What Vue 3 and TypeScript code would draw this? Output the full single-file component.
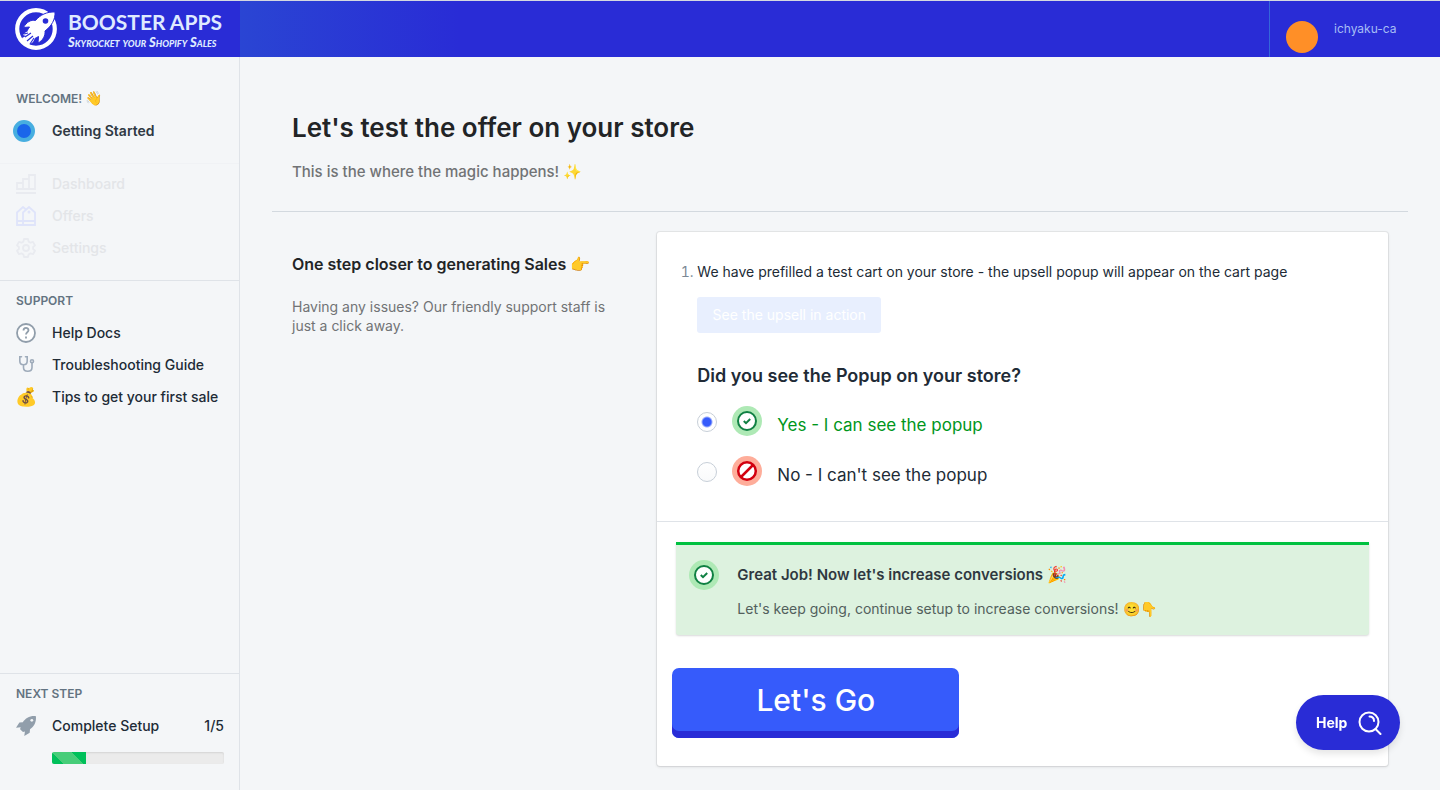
<script setup lang="ts">
import { ref } from 'vue'

type Answer = 'yes' | 'no'

const answer = ref<Answer>('yes')
const stepsDone = 1
const stepsTotal = 5
</script>

<template>
  <div class="app">
    <header class="topbar">
      <a class="brand" href="#" aria-label="Booster Apps">
        <svg class="brand-mark" viewBox="0 0 42 42" aria-hidden="true">
          <circle cx="21" cy="21" r="18.8" fill="none" stroke="#fff" stroke-width="4.2" />
          <path
            d="M40 4c-8-.5-15 3-19.500 8.500-4.500-1-9 1.500-12 7l6-.5c-2 2.500-3 5-3.500 7.500l5 5c2.500-.5 5-1.500 7.500-3l-.5 6.500c5-2.500 7.500-7.500 7-12C36.500 18 40.500 11.500 40 4Z"
            fill="#fff" stroke="#292cd6" stroke-width="1"
          />
          <circle cx="30.500" cy="13" r="2.800" fill="#292cd6" />
          <path d="m11 24 5-1-2 3 5-1-2 4 4-1-3 6-4 3-6-3-1-4 4-2-3-1Z" fill="#fff" />
          <path d="m10 29 6-4m-4 8 6-5m-9-2 4-1m2 11 4-6" stroke="#292cd6" stroke-width="1.200" fill="none" />
        </svg>
        <span class="brand-text">
          <span class="brand-name">BOOSTER APPS</span>
          <span class="brand-tag">Skyrocket your Shopify Sales</span>
        </span>
      </a>
      <button class="account" type="button">
        <span class="avatar"></span>
        <span class="account-name">ichyaku-ca</span>
      </button>
    </header>

    <div class="body">
      <aside class="sidebar">
        <nav class="group welcome">
          <h2 class="group-title">WELCOME! <span class="wave">👋</span></h2>
          <a class="item current" href="#"><span class="slot"><span class="dot"></span></span>Getting Started</a>
        </nav>

        <nav class="group disabled">
          <a class="item" href="#">
            <svg class="icon" viewBox="0 0 20 20" fill="none" stroke="#e9ebf0" stroke-width="1.800">
              <path d="M1 15V9h6v6Zm6 0V5h6v10Zm6 0V1h6v14ZM0 19h20" />
            </svg>Dashboard</a>
          <a class="item" href="#">
            <svg class="icon" viewBox="0 0 20 20" fill="none" stroke="#dfe4fa" stroke-width="1.800">
              <path d="M7 19V6.500L13 1l6 5.500V19H1V6.500L7 1l3 2.500M1 15h18" />
              <circle cx="13" cy="6" r=".6" />
            </svg>Offers</a>
          <a class="item" href="#">
            <svg class="icon" viewBox="0 0 20 20" fill="none" stroke="#e9ebf0" stroke-width="1.800" stroke-linejoin="round">
              <path d="M8 1h4l.6 2.600 1.900 1.100 2.500-.8 2 3.500L17.100 9v2l1.900 1.700-2 3.500-2.500-.8-1.900 1.100L12 19H8l-.6-2.500-1.900-1.100-2.500.8-2-3.500L2.900 11V9L1 7.400l2-3.500 2.500.8 1.900-1.100Z" />
              <circle cx="10" cy="10" r="3" />
            </svg>Settings</a>
        </nav>

        <nav class="group support">
          <h2 class="group-title">SUPPORT</h2>
          <a class="item" href="#">
            <svg class="icon" viewBox="0 0 20 20" fill="none" stroke="#919eab" stroke-width="1.800">
              <circle cx="10" cy="10" r="9" fill="#fff" />
              <path d="M7.500 7.600C7.500 4 12.500 4 12.500 7.300c0 2-2.500 2-2.500 4.200" />
              <path d="M10 13.500v2" />
            </svg>Help Docs</a>
          <a class="item" href="#">
            <svg class="icon" viewBox="0 0 20 20" fill="none" stroke="#9eabba" stroke-width="1.600" stroke-linecap="round">
              <path d="M5.500 1.800H3.800V6c0 5 7.400 5 7.400 0V1.800H9.500M7.500 10v2.500c0 5 8.500 5 8.500 0V8" />
              <circle cx="16" cy="6.300" r="1.500" />
            </svg>Troubleshooting Guide</a>
          <a class="item" href="#"><span class="slot emoji">💰</span>Tips to get your first sale</a>
        </nav>

        <section class="group next">
          <h2 class="group-title">NEXT STEP</h2>
          <a class="item" href="#">
            <svg class="icon rocket" viewBox="0 0 20 20" aria-hidden="true">
              <path
                d="M19.900.2C13.500-.4 9.800 2.300 6.800 6.200L3.400 6.500 0 11.800l4.700-.5c-.3.700-.5 1.300-.6 1.900l2.900 2.900c.7-.1 1.300-.3 1.900-.6L8.300 20l5.400-3.200.3-3.500C17.900 10.300 20.500 6.500 19.900.2Z"
                fill="#919eab"
              />
              <circle cx="15.800" cy="4.300" r="1.400" fill="#f4f6f8" />
            </svg>
            <span>Complete Setup</span>
            <span class="count">{{ stepsDone }}/{{ stepsTotal }}</span>
          </a>
          <div class="progress" role="progressbar" aria-label="Setup progress" :aria-valuenow="stepsDone" aria-valuemin="0" :aria-valuemax="stepsTotal">
            <div class="progress-fill" :style="{ width: (stepsDone / stepsTotal) * 100 + '%' }"></div>
          </div>
        </section>
      </aside>

      <main class="main">
        <header class="page-head">
          <h1>Let's test the offer on your store</h1>
          <p>This is the where the magic happens! ✨</p>
        </header>

        <div class="columns">
          <section class="intro">
            <h2>One step closer to generating Sales 👉</h2>
            <p>Having any issues? Our friendly support staff is just a click away.</p>
          </section>

          <section class="card">
            <div class="card-top">
              <ol class="steps">
                <li>We have prefilled a test cart on your store - the upsell popup will appear on the cart page</li>
              </ol>
              <button class="see" type="button" disabled>See the upsell in action</button>
              <fieldset class="question">
                <legend>Did you see the Popup on your store?</legend>
                <label class="choice yes">
                  <input v-model="answer" type="radio" name="seen" value="yes" />
                  <svg class="badge" viewBox="0 0 30 30" fill="none" aria-hidden="true">
                    <circle cx="15" cy="15" r="15" fill="#aee9b5" />
                    <circle cx="15" cy="15" r="9" fill="#fff" stroke="#108043" stroke-width="2" />
                    <path d="m11.800 15 2.200 2.200 4.200-4.200" stroke="#108043" stroke-width="2" />
                  </svg>
                  <span class="choice-text">Yes - I can see the popup</span>
                </label>
                <label class="choice">
                  <input v-model="answer" type="radio" name="seen" value="no" />
                  <svg class="badge" viewBox="0 0 30 30" fill="none" aria-hidden="true">
                    <circle cx="15" cy="15" r="15" fill="#fead9a" />
                    <circle cx="15" cy="15" r="8.800" fill="#fff" stroke="#d2000f" stroke-width="2.500" />
                    <path d="m9 21 12-12" stroke="#d2000f" stroke-width="2.500" />
                  </svg>
                  <span class="choice-text">No - I can't see the popup</span>
                </label>
              </fieldset>
            </div>

            <div class="card-bottom">
              <div class="banner" role="status">
                <svg class="badge" viewBox="0 0 30 30" fill="none" aria-hidden="true">
                  <circle cx="15" cy="15" r="15" fill="#aee9b5" />
                  <circle cx="15" cy="15" r="9" fill="#fff" stroke="#108043" stroke-width="2" />
                  <path d="m11.800 15 2.200 2.200 4.200-4.200" stroke="#108043" stroke-width="2" />
                </svg>
                <div>
                  <h3>Great Job! Now let's increase conversions <span class="party">🎉</span></h3>
                  <p>Let's keep going, continue setup to increase conversions! 😊👇</p>
                </div>
              </div>
              <button class="go" type="button">Let's Go</button>
            </div>
          </section>
        </div>
      </main>
    </div>

    <button class="help" type="button">
      Help
      <svg viewBox="0 0 24 24" fill="none" stroke="#fff" stroke-width="2" stroke-linecap="round" aria-hidden="true">
        <circle cx="11" cy="11" r="9.500" />
        <path d="m17.500 18 5 5M11.500 5.500c2.600 0 4.500 1.800 4.500 4.500" />
      </svg>
    </button>
  </div>
</template>

<style>
body {
  margin: 0;
  background: #f4f6f8;
}
</style>

<style scoped>
* {
  box-sizing: border-box;
}
.app {
  min-height: 100vh;
  display: flex;
  flex-direction: column;
  background: #f4f6f8;
  color: #212b36;
  font: 400 14px/20px Inter, "Liberation Sans", sans-serif;
}
h1, h2, h3, p, ol, fieldset {
  margin: 0;
  padding: 0;
}
button, input {
  font: inherit;
}
a {
  color: inherit;
  text-decoration: none;
}

.topbar {
  height: 57px;
  display: flex;
  justify-content: space-between;
  border-top: 1px solid #d4d8e0;
  background: linear-gradient(90deg, #2a45d3, #292cd6 220px) 240px 0 no-repeat #292cd6;
}
.brand {
  width: 240px;
  display: flex;
  align-items: center;
  gap: 11px;
  padding-left: 15px;
  color: #fff;
}
.brand-mark {
  width: 42px;
  height: 42px;
}
.brand-text {
  display: flex;
  flex-direction: column;
  gap: 2px;
  padding-top: 2px;
  color: #dfeaff;
  white-space: nowrap;
}
.brand-name {
  font: 700 21px/22px Lato, sans-serif;
}
.brand-tag {
  font: italic small-caps 900 13px/14px Lato, sans-serif;
}
.account {
  width: 171px;
  display: flex;
  gap: 16px;
  padding: 20px 0 0 16px;
  border: 0;
  border-left: 1px solid #3467da;
  background: none;
  color: #a6bdf5;
  text-align: left;
}
.avatar {
  width: 32px;
  height: 32px;
  border-radius: 50%;
  background: #ff8f27;
}
.account-name {
  font-size: 12px;
  line-height: 16px;
}

.body {
  flex: 1;
  display: flex;
}
.sidebar {
  flex: 0 0 240px;
  display: flex;
  flex-direction: column;
  border-right: 1px solid #dfe3e8;
}
.group {
  padding: 0 15px 0 16px;
}
.group-title {
  font-size: 12px;
  font-weight: 600;
  line-height: 16px;
  color: #637381;
}
.wave {
  font-size: 14px;
}
.item {
  height: 32px;
  display: flex;
  align-items: center;
  gap: 16px;
  font-weight: 500;
}
.icon, .slot {
  flex: none;
  width: 20px;
  height: 20px;
}
.welcome {
  padding-top: 33px;
  padding-bottom: 8px;
  border-bottom: 1px solid #f0f2f5;
}
.welcome .item {
  height: 48px;
  color: #2f3943;
  font-weight: 600;
}
.slot {
  display: flex;
  align-items: center;
  justify-content: center;
}
.dot {
  flex: none;
  width: 22px;
  height: 22px;
  margin-right: 4px;
  border: 4px solid #47aee0;
  border-radius: 50%;
  background: #1a66ea;
}
.disabled {
  padding-top: 4px;
  padding-bottom: 16px;
  border-bottom: 1px solid #dfe3e8;
}
.disabled .item {
  color: #e3e5e8;
}
.support {
  padding-top: 12px;
}
.support .item:first-of-type, .next .item {
  margin-top: 8px;
}
.emoji {
  font-size: 18px;
}
.next {
  margin-top: auto;
  padding-top: 12px;
  padding-bottom: 26px;
  border-top: 1px solid #dfe3e8;
}
.count {
  margin-left: auto;
}
.progress {
  height: 12px;
  margin: 10px 0 0 36px;
  border-radius: 2px;
  overflow: hidden;
  background: #ebebeb;
  box-shadow: inset 0 1px 2px #0000001a;
}
.progress-fill {
  height: 100%;
  background: linear-gradient(45deg, #00c05a 8px, #47cd79 8px, #47cd79 22px, #00c05a 22px);
}

.main {
  flex: 1;
  min-width: 0;
  padding: 54px 32px 24px;
}
.page-head {
  padding: 0 20px 29px;
  border-bottom: 1px solid #d3d9df;
}
h1 {
  font-size: 26px;
  font-weight: 600;
  line-height: 34px;
  color: #222426;
}
.page-head p {
  margin-top: 17px;
  font-size: 15px;
  font-weight: 500;
  line-height: 20px;
  color: #717375;
}
.columns {
  display: grid;
  grid-template-columns: 1fr 2fr;
  padding: 20px 20px 0;
}
.intro {
  padding: 20px 40px 0 0;
}
.intro h2 {
  font-size: 16px;
  font-weight: 600;
  line-height: 24px;
  color: #222426;
}
.intro p {
  margin-top: 21px;
  line-height: 19px;
  color: #717375;
}
.card {
  border-radius: 3px;
  background: #fff;
  box-shadow: 0 0 0 1px #3f3f4414, 0 1px 3px #3f3f4426;
}
.card-top {
  padding: 30px 40px 35px;
  border-bottom: 1px solid #dfe3e8;
}
.steps {
  list-style: decimal;
}
.steps li::marker {
  color: #7b8895;
}
.see {
  width: 184px;
  height: 36px;
  margin-top: 15px;
  padding: 0;
  border: 0;
  border-radius: 3px;
  background: #e8effe;
  color: #fff;
}
.question {
  min-width: 0;
  margin-top: 31px;
  border: 0;
}
.question legend {
  padding: 0;
  font-size: 18px;
  font-weight: 600;
  line-height: 24px;
}
.choice {
  height: 30px;
  display: flex;
  align-items: center;
  gap: 15px;
  margin-top: 20px;
}
.question legend + .choice {
  margin-top: 18px;
}
.choice input {
  appearance: none;
  width: 20px;
  height: 20px;
  margin: 2px 0 0;
  border: 1px solid #c7cfd8;
  border-radius: 50%;
  background: linear-gradient(#fff, #f9fafb);
}
.choice input:checked {
  background: radial-gradient(circle, #365bfb 4px, #fff 6px);
}
.badge {
  flex: none;
  width: 30px;
  height: 30px;
}
.choice-text {
  padding-top: 8px;
  font-size: 17px;
  line-height: 24px;
}
.yes .choice-text {
  color: #00961b;
}
.card-bottom {
  padding: 20px 15px 28px;
}
.banner {
  display: flex;
  gap: 18px;
  margin: 0 4px;
  padding: 15px 13px 16px;
  border-top: 3px solid #00c140;
  border-radius: 0 0 3px 3px;
  background: #ddf2df;
  box-shadow: 0 1px 2px #3f3f4433;
}
.banner h3 {
  margin-top: 2px;
  font-size: 15px;
  font-weight: 600;
  line-height: 24px;
  color: #2f3840;
}
.party {
  font-size: 16px;
}
.banner p {
  margin-top: 12px;
  color: #52605c;
  line-height: 20px;
}
.go {
  width: 287px;
  height: 70px;
  display: block;
  margin-top: 33px;
  padding: 0 0 6px;
  border: 0;
  border-radius: 7px;
  background: #365bfb;
  box-shadow: inset 0 -7px #292cd6;
  color: #fff;
  font-size: 30px;
  font-weight: 500;
}
.help {
  position: fixed;
  right: 40px;
  bottom: 40px;
  width: 104px;
  height: 55px;
  display: flex;
  align-items: center;
  justify-content: space-between;
  padding: 0 18px 0 20px;
  border: 0;
  border-radius: 28px;
  background: #292cd6;
  box-shadow: 0 4px 7px #0000001a;
  color: #fff;
  font-size: 14px;
  font-weight: 700;
}
.help svg {
  width: 24px;
  height: 24px;
}
</style>
